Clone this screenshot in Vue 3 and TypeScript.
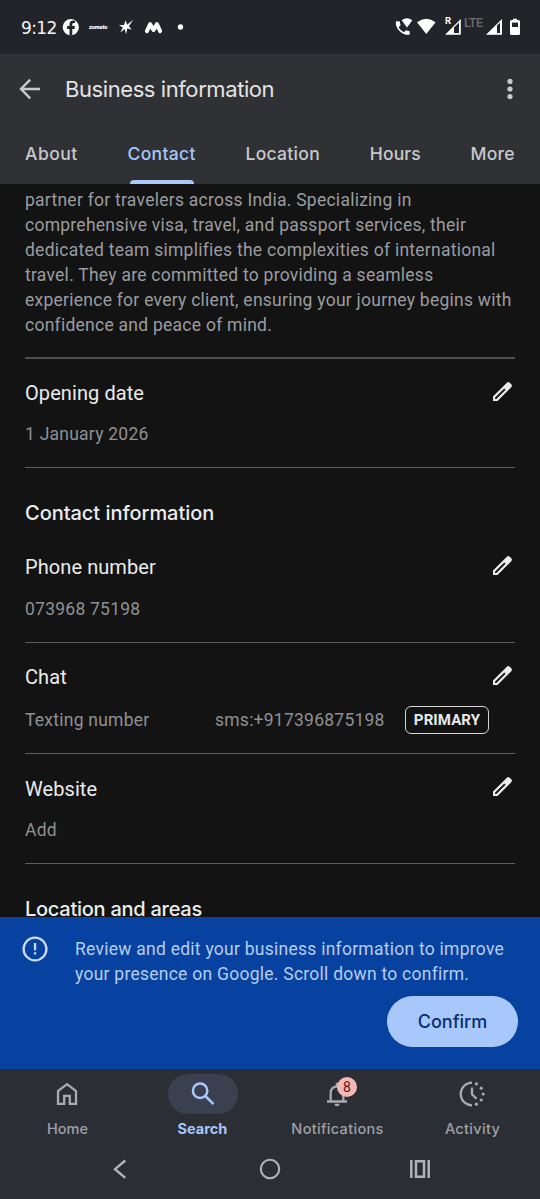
<script setup lang="ts">
interface Field {
  id: string
  title: string
  value: string
}

const tabs: string[] = ['About', 'Contact', 'Location', 'Hours', 'More']
const activeTab = 'Contact'

const description: string[] = [
  'partner for travelers across India. Specializing in',
  'comprehensive visa, travel, and passport services, their',
  'dedicated team simplifies the complexities of international',
  'travel. They are committed to providing a seamless',
  'experience for every client, ensuring your journey begins with',
  'confidence and peace of mind.',
]

const opening: Field = { id: 'opening', title: 'Opening date', value: '1 January 2026' }
const contact: Field[] = [
  { id: 'number', title: 'Phone number', value: '073968 75198' },
  { id: 'chat', title: 'Chat', value: 'Texting number' },
  { id: 'website', title: 'Website', value: 'Add' },
]
const pencil =
  'M16.6 2.900a2.400 2.400 0 0 1 3.300 0l1.200 1.200a2.400 2.400 0 0 1 0 3.300L7.500 21H3v-4.500zM14.300 8.400 5.100 17.600v1.300h1.300L15.600 9.700z'
</script>

<template>
  <div class="screen">
    <header class="status">
      <span class="clock">9:12</span>
      <svg class="status-left" width="122" height="24" viewBox="0 0 122 24">
        <circle cx="8.800" cy="12.200" r="8.100" fill="#fff" />
        <path d="M7.500 20.300v-6.400H5.100v-2.800h2.400V9.400c0-2.700 1.400-3.900 3.700-3.900.8 0 1.400.1 1.900.2v2.400h-1.300c-1.200 0-1.500.6-1.500 1.500v1.500H13l-.5 2.800h-2.200v6.400z" fill="#23242a" />
        <text x="27" y="14" class="zomato" textLength="18.500">zomato</text>
        <path d="M63.700 5.300 65.100 9.700 71.200 4.700 66.900 11.200 69.700 14.600 65.200 13.600 64.100 19.200 62.700 14.100 58.300 17.600 60.900 12.400 56.900 10.200 62 10.100z" fill="#fff" />
        <path d="M84.900 16.200 88.200 9.200 91.500 15 94.900 9.200 98.100 16.200" fill="none" stroke="#fff" stroke-width="4" stroke-linejoin="round" stroke-linecap="round" />
        <circle cx="118.500" cy="12" r="2.700" fill="#fff" />
      </svg>
      <svg class="status-right" width="130" height="24" viewBox="0 0 130 24">
        <path d="M1 6.500h3.600l1 4-2 1.900q2 3.500 5.300 5.100l2-2 3.800.9v3.600Q9 20.600 4.500 16.200T1 6.500z" transform="translate(0 -.2)" fill="#fff" />
        <path d="M6.700 5.300q5.300-4 10.600 0L12 12.500z" fill="#fff" />
        <path d="M22 7.200q9.300-7 18.600 0L31.300 19z" fill="#fff" />
        <text x="50" y="9.400" class="roam">R</text>
        <path d="M50 19.700 65.800 3.900v15.800zM59 12V18h5V7.500l-5 5z" fill="#fff" fill-rule="evenodd" />
        <text x="69" y="12.400" class="lte" textLength="19">LTE</text>
        <path d="M91 19.700 107 3.900v15.800zM102 10.500V18h3V7.800z" fill="#fff" fill-rule="evenodd" />
        <path d="M118 5h4V3.800h-4zM116.500 5h7q1.500 0 1.500 1.500v12q0 1.500-1.500 1.500h-7q-1.500 0-1.500-1.500v-12q0-1.500 1.500-1.500z" fill="#fff" />
        <path d="M117 7.600h6V12h-6z" fill="#23242a" />
      </svg>
    </header>

    <div class="appbar">
      <div class="title-row">
        <svg class="back" width="22" height="22" viewBox="0 0 22 22" fill="none" stroke="#c8c9cc" stroke-width="2.400">
          <path d="M21 11H2.500M11.200 1.700 2 11l9.200 9.300" />
        </svg>
        <h1>Business information</h1>
        <svg class="overflow" width="8" height="22" viewBox="0 0 8 22" fill="#c8c9cc">
          <circle cx="4" cy="3.400" r="2.600" />
          <circle cx="4" cy="11" r="2.600" />
          <circle cx="4" cy="18.500" r="2.600" />
        </svg>
      </div>
      <nav class="tabs">
        <span v-for="tab in tabs" :key="tab" class="tab" :class="{ active: tab === activeTab }">{{ tab }}</span>
      </nav>
    </div>

    <main class="content">
      <section class="about">
        <p v-for="(line, i) in description" :key="i">{{ line }}</p>
      </section>
      <article class="field opening">
        <h3>{{ opening.title }}</h3>
        <div class="value"><span>{{ opening.value }}</span></div>
        <svg class="pencil" width="24" height="24" viewBox="0 0 24 24"><path :d="pencil" fill-rule="evenodd" /></svg>
      </article>
      <h2>Contact information</h2>
      <article v-for="f in contact" :key="f.id" class="field" :class="f.id">
        <h3>{{ f.title }}</h3>
        <div class="value">
          <span>{{ f.value }}</span>
          <template v-if="f.id === 'chat'">
            <span class="sms">sms:+917396875198</span>
            <b class="chip">PRIMARY</b>
          </template>
        </div>
        <svg class="pencil" width="24" height="24" viewBox="0 0 24 24"><path :d="pencil" fill-rule="evenodd" /></svg>
      </article>
      <h2 class="areas">Location and areas</h2>
    </main>

    <aside class="banner">
      <svg class="info" width="26" height="26" viewBox="0 0 26 26">
        <circle cx="13" cy="13" r="11.400" fill="none" stroke="#c9dafa" stroke-width="2.300" />
        <path d="M11.900 7h2.300v7.200h-2.300zM11.900 16.300h2.300v2.300h-2.300z" fill="#c9dafa" />
      </svg>
      <div class="banner-body">
        <p>Review and edit your business information to improve</p>
        <p>your presence on Google. Scroll down to confirm.</p>
        <button type="button">Confirm</button>
      </div>
    </aside>

    <footer class="bottom">
      <nav class="dock">
        <div class="dock-item">
          <div class="pill">
            <svg width="30" height="30" viewBox="0 0 30 30" fill="none" stroke="#a9abae" stroke-width="2.300">
              <path d="M6 24.800V12l9-6.900 9 6.900v12.800h-6.200v-8h-5.600v8z" />
            </svg>
          </div>
          <span>Home</span>
        </div>
        <div class="dock-item selected">
          <div class="pill">
            <svg width="30" height="30" viewBox="0 0 30 30" fill="none" stroke="#a8c7fa" stroke-width="2.500">
              <circle cx="12.100" cy="11.800" r="7.200" />
              <path d="m17.300 17 8.200 8.200" />
            </svg>
          </div>
          <span>Search</span>
        </div>
        <div class="dock-item notifications">
          <div class="pill">
            <svg width="30" height="30" viewBox="0 0 30 30" fill="none" stroke="#a9abae" stroke-width="2.300">
              <path d="M5 22.500h20M8.700 22v-8.400a6.300 6.300 0 0 1 12.600 0V22M15 7.600V3.800" />
              <path d="M12.400 24.800h5.200a2.600 2.400 0 0 1-5.200 0z" fill="#a9abae" stroke="none" />
            </svg>
            <b class="count">8</b>
          </div>
          <span>Notifications</span>
        </div>
        <div class="dock-item activity">
          <div class="pill">
            <svg width="30" height="30" viewBox="0 0 30 30" fill="none" stroke="#a9abae" stroke-width="2.300">
              <path d="M15 3.700a11.300 11.300 0 0 0 0 22.600M15 8.500v6.700l4.500 4.500" />
              <g fill="#a9abae" stroke="none">
                <circle cx="19.400" cy="4.900" r="1.600" />
                <circle cx="24.200" cy="9.200" r="1.600" />
                <circle cx="26.200" cy="15" r="1.600" />
                <circle cx="24.200" cy="21" r="1.600" />
                <circle cx="19.400" cy="25.200" r="1.600" />
              </g>
            </svg>
          </div>
          <span>Activity</span>
        </div>
      </nav>
      <div class="system">
        <svg width="22" height="22" viewBox="0 0 22 22" fill="none" stroke="#b2b3b6" stroke-width="2.400">
          <path d="M16.300 2.500 6 11.200l10.300 8.700" />
        </svg>
        <svg width="22" height="22" viewBox="0 0 22 22" fill="none" stroke="#b2b3b6" stroke-width="2.100">
          <circle cx="11" cy="11" r="9.200" />
        </svg>
        <svg width="22" height="22" viewBox="0 0 22 22" fill="none" stroke="#b2b3b6" stroke-width="2.500">
          <path d="M2.300 2v18M19.700 2v18M7 3.200h8v15.600H7z" />
        </svg>
      </div>
    </footer>
  </div>
</template>

<style>
body {
  margin: 0;
  background: #131313;
}
</style>

<style scoped>
.screen {
  width: 540px;
  height: 1199px;
  display: flex;
  flex-direction: column;
  overflow: hidden;
  background: #131313;
  font-family: Roboto, "Liberation Sans", sans-serif;
  color: #e8e8e8;
}
h1, h2, h3, p {
  margin: 0;
  font-weight: 400;
  white-space: nowrap;
}
svg {
  display: block;
  flex: none;
}
.status {
  height: 54px;
  flex: none;
  display: flex;
  align-items: center;
  background: #23242a;
  padding: 0 15px 0 20px;
}
.clock {
  width: 41px;
  font: 17px/24px "DejaVu Sans", sans-serif;
  letter-spacing: -0.600px;
  padding: 2px 0 0 1px;
  color: #f4f4f4;
}
.status-right {
  margin-left: auto;
}
.zomato {
  font: italic 900 6px Roboto, sans-serif;
  fill: #fff;
}
.roam {
  font: 700 9.500px Roboto, sans-serif;
  fill: #fff;
}
.lte {
  font: 500 12.500px Roboto, sans-serif;
  fill: #6c6d72;
}
.appbar {
  height: 130px;
  flex: none;
  background: #303134;
}
.title-row {
  height: 70px;
  display: flex;
  align-items: center;
  padding: 0 26px 0 19px;
}
h1 {
  margin-left: 24px;
  font: 400 22px/28px Inter, sans-serif;
  letter-spacing: -0.420px;
  color: #e3e3e3;
}
.overflow {
  margin-left: auto;
}
.tabs {
  height: 60px;
  display: flex;
  justify-content: space-between;
  padding: 0 25px;
}
.tab {
  position: relative;
  line-height: 60px;
  font-family: Inter, sans-serif;
  font-size: 17.500px;
  font-weight: 500;
  letter-spacing: 0.300px;
  color: #c8c9cc;
}
.tab:first-child {
  letter-spacing: 0.500px;
}
.tab:nth-child(4) {
  letter-spacing: 0.100px;
}
.tab.active {
  color: #a8c7fa;
}
.tab.active::after {
  content: "";
  position: absolute;
  left: 2px;
  right: 2px;
  bottom: 0;
  height: 4px;
  border-radius: 4px 4px 0 0;
  background: #a8c7fa;
}
.content {
  height: 733px;
  flex: none;
  box-sizing: border-box;
  overflow: hidden;
  padding: 4px 25px 0;
}
.about {
  height: 169px;
  border-bottom: 2px solid #4c4d4e;
}
.about p,
.banner p {
  font-size: 17.500px;
  line-height: 25px;
  letter-spacing: 0.255px;
}
.about p {
  color: #9b9ca0;
}
.field {
  position: relative;
  height: 110px;
  box-sizing: border-box;
  padding-top: 22px;
  border-bottom: 1px solid #5a5f64;
}
.field.opening {
  height: 109px;
}
.field.chat {
  height: 111px;
}
h3 {
  font-size: 20px;
  line-height: 24px;
  letter-spacing: 0.080px;
  color: #ececec;
}
.value {
  margin-top: 17px;
  height: 25px;
  display: flex;
  align-items: center;
  font-size: 17.500px;
  letter-spacing: 0.240px;
  color: #8f9094;
}
.opening .value {
  margin-top: 16px;
}
.chat .value {
  margin-top: 18px;
}
.website h3 {
  padding-top: 1px;
  margin-bottom: -1px;
}
.pencil {
  position: absolute;
  right: 1px;
  top: 21px;
  fill: #ececec;
}
.chat .value > span:first-child {
  width: 190px;
}
.sms {
  width: 190px;
}
.chip {
  box-sizing: border-box;
  width: 84px;
  height: 28px;
  flex: none;
  border: 1px solid #d5d5d5;
  border-radius: 6px;
  text-align: center;
  line-height: 26px;
  font-size: 15px;
  letter-spacing: 0.100px;
  font-weight: 700;
  color: #e8eaed;
}
h2 {
  height: 65px;
  box-sizing: border-box;
  padding-top: 33px;
  font: 500 20px/24px Inter, sans-serif;
  letter-spacing: -0.040px;
  color: #ececec;
}
h2.areas {
  height: 53px;
  padding-top: 37px;
  line-height: 16px;
  letter-spacing: -0.260px;
}
.banner {
  height: 152px;
  flex: none;
  box-sizing: border-box;
  display: flex;
  padding: 19px 22px 0;
  background: #0842a0;
}
.banner-body {
  flex: 1;
  display: flex;
  flex-direction: column;
  margin-left: 27px;
  padding-top: 1px;
}
.banner p {
  color: #b5cdf2;
}
button {
  align-self: flex-end;
  width: 131px;
  height: 51px;
  margin-top: 9px;
  padding: 0 0 1px;
  border: 0;
  border-radius: 26px;
  background: #a8c7fa;
  color: #062e6f;
  font: 500 18px Inter, sans-serif;
}
.bottom {
  height: 130px;
  flex: none;
  background: #2c2e35;
}
.dock {
  height: 75px;
  display: grid;
  grid-template-columns: repeat(4, 135px);
}
.dock-item {
  display: flex;
  flex-direction: column;
  align-items: center;
  padding-top: 5px;
  font: 500 14.500px/20px Inter, sans-serif;
  color: #9fa1a5;
}
.dock-item > span {
  margin-top: 5px;
}
.notifications > span,
.activity > span {
  letter-spacing: 0.320px;
}
.pill {
  position: relative;
  width: 70px;
  height: 40px;
  display: flex;
  align-items: center;
  justify-content: center;
  border-radius: 20px;
}
.selected {
  font-weight: 700;
  color: #a8c7fa;
}
.selected .pill {
  background: #3b4051;
}
.pill svg {
  margin-left: -1px;
}
.selected .pill svg {
  margin-left: 0;
}
.count {
  position: absolute;
  left: 34.500px;
  top: 3px;
  width: 20px;
  height: 20px;
  border-radius: 50%;
  background: #f2b8b5;
  color: #601410;
  text-align: center;
  font: 400 14px/20px Roboto, sans-serif;
}
.system {
  height: 50px;
  display: flex;
  align-items: center;
  justify-content: space-between;
  padding: 0 109px;
}
</style>
